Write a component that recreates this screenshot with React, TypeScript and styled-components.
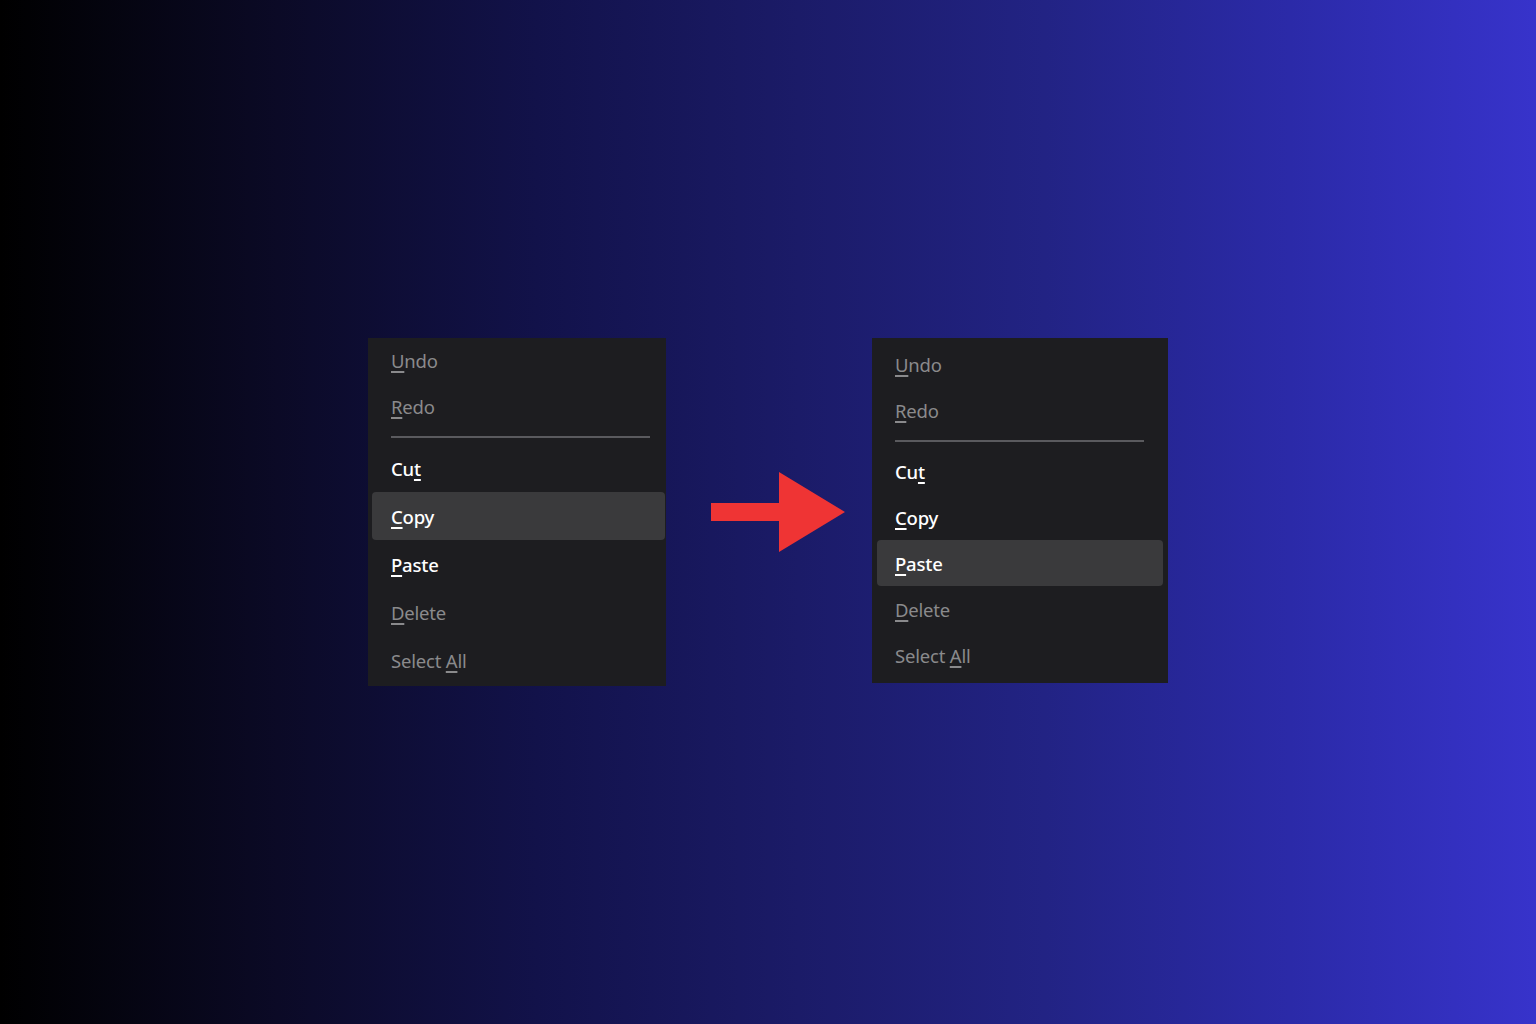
import React from "react";
import styled, { createGlobalStyle } from "styled-components";

const Global = createGlobalStyle`
  html, body {
    margin: 0;
    padding: 0;
  }
  body {
    font-family: "Noto Sans", "Open Sans", sans-serif;
  }
`;

const Stage = styled.div`
  width: 1536px;
  height: 1024px;
  box-sizing: border-box;
  padding: 338px 0 0 368px;
  display: flex;
  align-items: flex-start;
  background: linear-gradient(
    90deg,
    #000000 0%,
    #0b0a26 18%,
    #12124a 35%,
    #1b1b68 52%,
    #222384 68%,
    #2b2aa8 84%,
    #3733cb 100%
  );
`;

const Menu = styled.div<{ $pt: number; $pb: number; $w: number }>`
  width: ${(p) => p.$w}px;
  padding: ${(p) => p.$pt}px 0 ${(p) => p.$pb}px;
  background: #1d1d20;
  display: flex;
  flex-direction: column;
  box-sizing: border-box;
  flex-shrink: 0;
`;

const Row = styled.div<{ $h: number; $active?: boolean; $disabled?: boolean; $l: number; $r: number }>`
  height: ${(p) => p.$h}px;
  margin: 0 ${(p) => p.$r}px 0 ${(p) => p.$l}px;
  padding-left: ${(p) => 23 - p.$l}px;
  display: flex;
  align-items: center;
  border-radius: ${(p) => (p.$active ? "4px" : "0")};
  background: ${(p) => (p.$active ? "#3a3a3c" : "transparent")};
  color: ${(p) => (p.$disabled ? "#8a8a8c" : "#ffffff")};
  font-size: 18.5px;
  font-weight: ${(p) => (p.$disabled ? 400 : 500)};
  letter-spacing: -0.2px;
`;

const Label = styled.span`
  white-space: pre;
`;

const Key = styled.span`
  text-decoration: underline;
  text-decoration-thickness: 1.5px;
  text-underline-offset: 3px;
`;

const SepWrap = styled.div<{ $h: number; $r: number }>`
  height: ${(p) => p.$h}px;
  display: flex;
  align-items: center;
  padding: 0 ${(p) => p.$r}px 0 23px;
`;

const SepLine = styled.div`
  flex: 1;
  height: 2px;
  background: #5a5a5e;
`;

const ArrowBox = styled.div<{ $ml: number; $mr: number; $mt: number }>`
  margin: ${(p) => p.$mt}px ${(p) => p.$mr}px 0 ${(p) => p.$ml}px;
  display: flex;
  flex-shrink: 0;
`;

type Item = { pre: string; key: string; post: string; disabled?: boolean };

const top: Item[] = [
  { pre: "", key: "U", post: "ndo", disabled: true },
  { pre: "", key: "R", post: "edo", disabled: true },
];
const bottom: Item[] = [
  { pre: "Cu", key: "t", post: "" },
  { pre: "", key: "C", post: "opy" },
  { pre: "", key: "P", post: "aste" },
  { pre: "", key: "D", post: "elete", disabled: true },
  { pre: "Select ", key: "A", post: "ll", disabled: true },
];

interface MenuProps {
  width: number;
  rowH: number;
  firstH: number;
  pt: number;
  pb: number;
  sepH: number;
  sepR: number;
  active: string;
  hl: number;
  hr: number;
}

const ContextMenu = ({ width, rowH, firstH, pt, pb, sepH, sepR, active, hl, hr }: MenuProps) => {
  const render = (it: Item, h: number) => {
    const label = it.pre + it.key + it.post;
    const on = label === active;
    return (
      <Row key={label} $h={h} $active={on} $disabled={it.disabled} $l={on ? hl : 0} $r={on ? hr : 0}>
        <Label>
          {it.pre}
          <Key>{it.key}</Key>
          {it.post}
        </Label>
      </Row>
    );
  };
  return (
    <Menu $w={width} $pt={pt} $pb={pb}>
      {render(top[0], firstH)}
      {render(top[1], rowH)}
      <SepWrap $h={sepH} $r={sepR}>
        <SepLine />
      </SepWrap>
      {bottom.map((it) => render(it, rowH))}
    </Menu>
  );
};

const Arrow = () => (
  <svg width="135" height="81" viewBox="0 0 135 81">
    <polygon points="0,31 68,31 68,0 134,40 68,80 68,49 0,49" fill="#ef3434" />
  </svg>
);

export default function App() {
  return (
    <>
      <Global />
      <Stage>
        <ContextMenu
          width={298}
          rowH={48}
          firstH={44}
          pt={0}
          pb={2}
          sepH={14}
          sepR={16}
          active="Copy"
          hl={4}
          hr={1}
        />
        <ArrowBox $ml={45} $mr={26} $mt={134}>
          <Arrow />
        </ArrowBox>
        <ContextMenu
          width={296}
          rowH={46}
          firstH={46}
          pt={3}
          pb={5}
          sepH={15}
          sepR={24}
          active="Paste"
          hl={5}
          hr={5}
        />
      </Stage>
    </>
  );
}
